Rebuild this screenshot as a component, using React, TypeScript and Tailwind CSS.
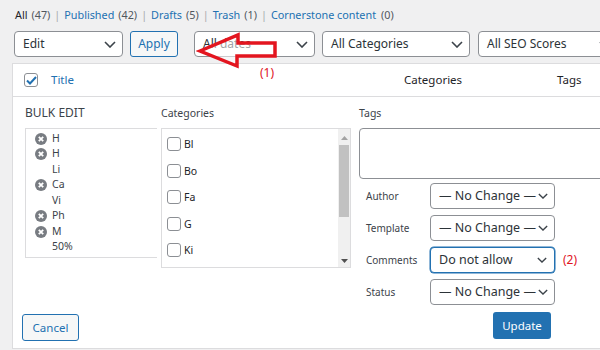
import { ReactNode } from 'react'

const FONT = { fontFamily: '"Noto Sans", "Open Sans", sans-serif' }

function Chevron({ small }: { small?: boolean }) {
  return (
    <svg width={small ? 10 : 12} height={small ? 6 : 7} viewBox="0 0 12 7" className="shrink-0">
      <path d="M1 1l5 5 5-5" fill="none" stroke="#3c434a" strokeWidth="1.6" />
    </svg>
  )
}

function Select({ label, className = '', small, focus }: { label: string; className?: string; small?: boolean; focus?: boolean }) {
  return (
    <div
      className={`flex h-[26px] shrink-0 items-center justify-between rounded-[4px] bg-white pl-[8px] pr-[6px] text-[#2c3338] ${
        focus ? 'border border-[#2271b1] shadow-[0_0_0_0.5px_#2271b1]' : 'border border-[#8c8f94]'
      } ${small ? 'text-[12.5px]' : 'text-[12px]'} ${className}`}
    >
      <span className="whitespace-nowrap">{label}</span>
      <Chevron small={small} />
    </div>
  )
}

function RemoveIcon() {
  return (
    <svg width="12" height="12" viewBox="0 0 12 12" className="shrink-0">
      <circle cx="6" cy="6" r="6" fill="#787c82" />
      <path d="M3.8 3.8l4.4 4.4M8.2 3.8l-4.4 4.4" stroke="#fff" strokeWidth="1.8" />
    </svg>
  )
}

const POSTS: { text: string; icon: boolean }[] = [
  { text: 'H', icon: true },
  { text: 'H', icon: true },
  { text: 'Li', icon: false },
  { text: 'Ca', icon: true },
  { text: 'Vi', icon: false },
  { text: 'Ph', icon: true },
  { text: 'M', icon: true },
  { text: '50%', icon: false },
  { text: '', icon: true },
]

const CATS = ['Bl', 'Bo', 'Fa', 'G', 'Ki', '']

function Field({ label, children }: { label: string; children: ReactNode }) {
  return (
    <div className="flex items-center">
      <span className="w-[71px] shrink-0 pl-[7px] text-[10px] text-[#3c434a]">{label}</span>
      {children}
    </div>
  )
}

function Sep() {
  return <span className="mx-[4px] text-[#a7aaad]">|</span>
}

export default function App() {
  return (
    <div className="relative h-[350px] w-[600px] overflow-hidden bg-[#f0f0f1]" style={FONT}>
      {/* status links */}
      <div className="flex h-[30px] items-center whitespace-nowrap pl-[15px] text-[10.8px] text-[#50575e]">
        <span className="text-[#1d2327]">All</span>
        <span className="ml-[4px]">(47)</span>
        <Sep />
        <span className="text-[#2271b1]">Published</span>
        <span className="ml-[4px]">(42)</span>
        <Sep />
        <span className="text-[#2271b1]">Drafts</span>
        <span className="ml-[4px]">(5)</span>
        <Sep />
        <span className="text-[#2271b1]">Trash</span>
        <span className="ml-[4px]">(1)</span>
        <Sep />
        <span className="text-[#2271b1]">Cornerstone content</span>
        <span className="ml-[5px]">(0)</span>
      </div>

      {/* filters */}
      <div className="mt-[1px] flex h-[26px] items-center">
        <Select label="Edit" className="ml-[14px] w-[109px]" />
        <div className="ml-[7px] flex h-[26px] w-[48px] shrink-0 items-center justify-center rounded-[3px] border border-[#2271b1] bg-[#f6f7f7] text-[12px] text-[#2271b1]">
          Apply
        </div>
        <Select label="All dates" className="ml-[16px] w-[121px]" />
        <Select label="All Categories" className="ml-[7px] w-[148px]" />
        <Select label="All SEO Scores" className="ml-[8px] w-[140px]" />
      </div>

      {/* table */}
      <div className="ml-[12px] mt-[6px] h-[286px] w-[600px] border border-[#dcdcde] bg-white">
        <div className="flex h-[33px] items-center border-b border-[#dcdcde] text-[11.5px]">
          <div className="ml-[11px] flex h-[14px] w-[14px] shrink-0 items-center justify-center rounded-[3px] border border-[#8c8f94]">
            <svg width="11" height="9" viewBox="0 0 11 9">
              <path d="M1 4.5l3 3L10 1" fill="none" stroke="#2271b1" strokeWidth="2" />
            </svg>
          </div>
          <span className="ml-[13px] w-[353px] shrink-0 text-[#2271b1]">Title</span>
          <span className="w-[153px] shrink-0 text-[#1d2327]">Categories</span>
          <span className="text-[#1d2327]">Tags</span>
        </div>

        <div className="flex pl-[12px] pt-[8px] text-[10.5px] text-[#1d2327]">
          {/* posts */}
          <div className="w-[132px] shrink-0">
            <div className="h-[16px] text-[12px] leading-[16px] text-[#3c434a]">BULK EDIT</div>
            <div className="mt-[7px] h-[130px] overflow-hidden border-y border-l border-[#dcdcde] pt-[2px]">
              {POSTS.map((p, i) => (
                <div key={i} className="flex h-[15.5px] items-center text-[10.5px] text-[#3c434a]">
                  <div className="flex w-[26px] justify-end pr-[5px]">{p.icon && <RemoveIcon />}</div>
                  <span className="whitespace-nowrap">{p.text}</span>
                </div>
              ))}
            </div>
            <div className="-ml-[3px] mt-[56px] flex h-[27px] w-[57px] items-center justify-center rounded-[3px] border border-[#2271b1] bg-[#f6f7f7] text-[11.5px] text-[#2271b1]">
              Cancel
            </div>
          </div>

          {/* categories */}
          <div className="ml-[4px] w-[190px] shrink-0">
            <div className="h-[16px] leading-[16px] text-[#3c434a]">Categories</div>
            <div className="mt-[7px] flex h-[140px] overflow-hidden border border-[#dcdcde]">
              <div className="flex-1 pl-[5px] pt-[8px]">
                {CATS.map((c, i) => (
                  <div key={i} className="flex h-[26.5px] items-start">
                    <div className="h-[14px] w-[14px] rounded-[3px] border border-[#8c8f94] bg-white" />
                    <span className="ml-[3px] whitespace-nowrap text-[10.5px] leading-[14px]">{c}</span>
                  </div>
                ))}
              </div>
              <div className="flex w-[12px] flex-col items-center bg-[#f0f0f0]">
                <svg width="7" height="4" viewBox="0 0 7 4" className="mt-[7px]">
                  <path d="M0 4L3.5 0 7 4z" fill="#a3a3a3" />
                </svg>
                <div className="mt-[5px] h-[72px] w-[10px] bg-[#c1c1c1]" />
                <div className="flex-1" />
                <svg width="7" height="4" viewBox="0 0 7 4" className="mb-[4px]">
                  <path d="M0 0h7L3.5 4z" fill="#505050" />
                </svg>
              </div>
            </div>
          </div>

          {/* tags & fields */}
          <div className="ml-[8px] flex-1">
            <div className="h-[16px] leading-[16px] text-[#3c434a]">Tags</div>
            <div className="mt-[7px] h-[51px] rounded-[4px] border border-[#8c8f94]" />
            <div className="mt-[4px] flex flex-col gap-[6px]">
              <Field label="Author">
                <Select label="— No Change —" small className="w-[125px]" />
              </Field>
              <Field label="Template">
                <Select label="— No Change —" small className="w-[125px]" />
              </Field>
              <Field label="Comments">
                <Select label="Do not allow" small focus className="w-[125px] pr-[7px]" />
                <span className="ml-[8px] text-[12px] text-[#e0141e]">(2)</span>
              </Field>
              <Field label="Status">
                <Select label="— No Change —" small className="w-[125px]" />
              </Field>
            </div>
            <div className="ml-[134px] mt-[7px] flex h-[27px] w-[58px] items-center justify-center rounded-[3px] bg-[#2271b1] text-[11.5px] text-white">
              Update
            </div>
          </div>
        </div>
      </div>

      {/* annotation (1): arrow over the date filter */}
      <svg width="84" height="40" viewBox="0 0 84 40" className="absolute left-[196px] top-[30px]">
        <path
          d="M4 21L42 5V13H79V26H41V36Z"
          fill="rgba(255,255,255,0.55)"
          stroke="#e3151f"
          strokeWidth="3.5"
          strokeLinejoin="miter"
        />
      </svg>
      <span className="absolute left-[260px] top-[65px] text-[12px] leading-[16px] text-[#e0141e]">(1)</span>
    </div>
  )
}
